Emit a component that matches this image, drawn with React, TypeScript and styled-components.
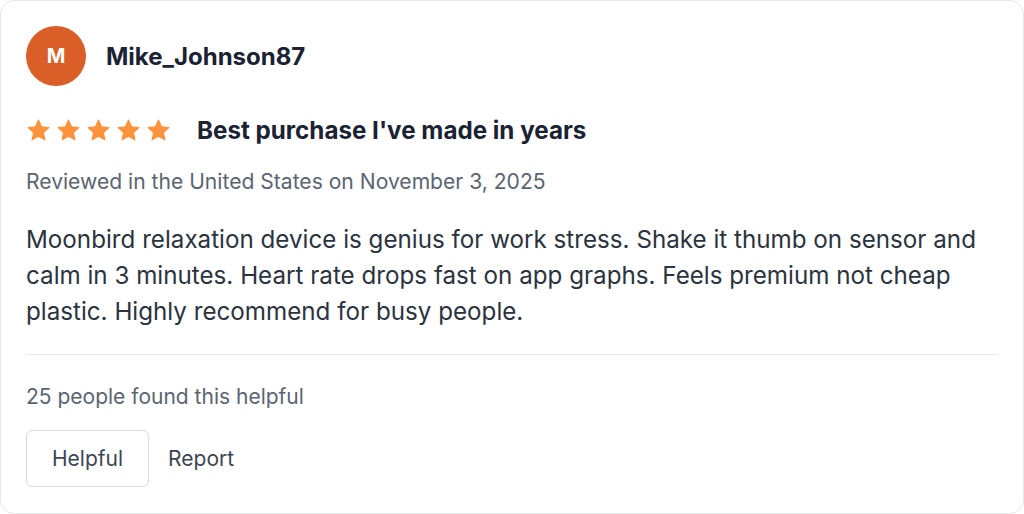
import React from "react";
import styled, { createGlobalStyle } from "styled-components";

const Global = createGlobalStyle`
  html, body { margin: 0; padding: 0; background: #ffffff; }
  body { font-family: Inter, "Noto Sans", sans-serif; }
  * { box-sizing: border-box; }
`;

const Card = styled.article`
  width: 1024px;
  height: 514px;
  border: 1.5px solid #e5e7eb;
  border-radius: 14px;
  background: #ffffff;
  padding: 25px 25px 0 25px;
  display: flex;
  flex-direction: column;
`;

const Header = styled.div`
  display: flex;
  align-items: center;
  gap: 20px;
`;

const Avatar = styled.div`
  width: 60px;
  height: 60px;
  border-radius: 50%;
  background: #da5e28;
  color: #ffffff;
  font-weight: 700;
  font-size: 20px;
  display: flex;
  align-items: center;
  justify-content: center;
`;

const Name = styled.div`
  font-size: 24px;
  font-weight: 700;
  color: #1a2233;
`;

const RatingRow = styled.div`
  display: flex;
  align-items: center;
  gap: 26px;
  margin-top: 30px;
  height: 29px;
`;

const Stars = styled.div`
  display: flex;
  gap: 5px;
`;

const Title = styled.h2`
  margin: 0;
  font-size: 24.2px;
  font-weight: 700;
  color: #1a2233;
`;

const Meta = styled.div`
  margin-top: 24px;
  font-size: 21.1px;
  line-height: 25px;
  color: #5b6472;
`;

const Body = styled.p`
  margin: 28px 0 0 0;
  font-size: 24.2px;
  line-height: 36px;
  color: #2b3340;
`;

const Divider = styled.hr`
  border: none;
  border-top: 1px solid #e5e7eb;
  margin: 24px 0 0 0;
  width: 100%;
`;

const Helpful = styled.div`
  margin-top: 29px;
  font-size: 21px;
  line-height: 25px;
  color: #5b6472;
`;

const Actions = styled.div`
  display: flex;
  align-items: center;
  gap: 19px;
  margin-top: 21px;
`;

const Button = styled.button<{ $outlined?: boolean }>`
  font-family: inherit;
  font-size: 21px;
  color: #3d4552;
  background: #ffffff;
  height: 57px;
  border-radius: 6px;
  border: ${(p) => (p.$outlined ? "1px solid #d6d9de" : "none")};
  padding: ${(p) => (p.$outlined ? "0 25px" : "0")};
  cursor: pointer;
`;

const Star = () => (
  <svg width="25" height="25" viewBox="0 0 24 24">
    <path
      fill="#fb923c"
      stroke="#fb923c"
      strokeWidth="1"
      strokeLinejoin="round"
      d="M12 2l2.94 6.44 7.06.8-5.24 4.8 1.43 6.96L12 17.5l-6.19 3.5 1.43-6.96L2 9.24l7.06-.8z"
    />
  </svg>
);

export default function App() {
  return (
    <>
      <Global />
      <Card>
        <Header>
          <Avatar>M</Avatar>
          <Name>Mike_Johnson87</Name>
        </Header>
        <RatingRow>
          <Stars>
            {[0, 1, 2, 3, 4].map((i) => (
              <Star key={i} />
            ))}
          </Stars>
          <Title>Best purchase I've made in years</Title>
        </RatingRow>
        <Meta>Reviewed in the United States on November 3, 2025</Meta>
        <Body>
          Moonbird relaxation device is genius for work stress. Shake it thumb on sensor and calm in 3 minutes.
          Heart rate drops fast on app graphs. Feels premium not cheap plastic. Highly recommend for busy people.
        </Body>
        <Divider />
        <Helpful>25 people found this helpful</Helpful>
        <Actions>
          <Button $outlined>Helpful</Button>
          <Button>Report</Button>
        </Actions>
      </Card>
    </>
  );
}
